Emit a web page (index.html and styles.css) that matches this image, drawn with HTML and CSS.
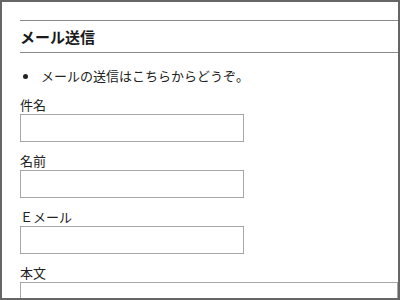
FILE: index.html
```html
<!DOCTYPE html>
<html lang="ja">
<head>
<meta charset="utf-8">
<link rel="stylesheet" href="styles.css">
</head>
<body>
<div class="frame">
  <h2 class="title">メール送信</h2>
  <ul class="notes">
    <li class="note">メールの送信はこちらからどうぞ。</li>
  </ul>
  <form class="mail-form">
    <div class="row">
      <label class="label">件名</label>
      <input class="field" type="text">
    </div>
    <div class="row">
      <label class="label">名前</label>
      <input class="field" type="text">
    </div>
    <div class="row">
      <label class="label">Ｅメール</label>
      <input class="field" type="text">
    </div>
    <div class="row">
      <label class="label">本文</label>
      <textarea class="body-field"></textarea>
    </div>
  </form>
</div>
</body>
</html>
```
FILE: styles.css
```css
html, body {
  margin: 0;
  padding: 0;
  background: #fff;
}
body {
  font-family: "Noto Sans CJK JP", "Noto Sans", sans-serif;
  font-size: 13px;
  color: #222;
}
.frame {
  width: 400px;
  height: 300px;
  box-sizing: border-box;
  border: 2px solid #666;
  padding: 18px 0 0 18px;
  overflow: hidden;
}
.title {
  margin: 0;
  height: 31px;
  line-height: 31px;
  border-top: 1px solid #8a8a8a;
  border-bottom: 1px solid #8a8a8a;
  font-size: 15px;
  font-weight: bold;
  color: #1a1a1a;
}
.notes {
  list-style: none;
  margin: 13px 0 10px;
  padding: 0;
}
.note {
  display: flex;
  align-items: center;
  gap: 13px;
  height: 20px;
  line-height: 20px;
}
.note::before {
  content: "";
  width: 5px;
  height: 5px;
  margin-left: 3px;
  border-radius: 50%;
  background: #222;
}
.mail-form {
  display: flex;
  flex-direction: column;
  gap: 10px;
}
.row {
  display: flex;
  flex-direction: column;
}
.label {
  display: block;
  height: 18px;
  line-height: 18px;
}
.field {
  box-sizing: border-box;
  width: 224px;
  height: 28px;
  margin: 0;
  border: 1px solid #a6a6ab;
  padding: 2px 4px;
  font: inherit;
}
.body-field {
  box-sizing: border-box;
  width: 100%;
  height: 60px;
  margin: 0;
  border: 1px solid #a6a6ab;
  font: inherit;
  resize: none;
}
```
